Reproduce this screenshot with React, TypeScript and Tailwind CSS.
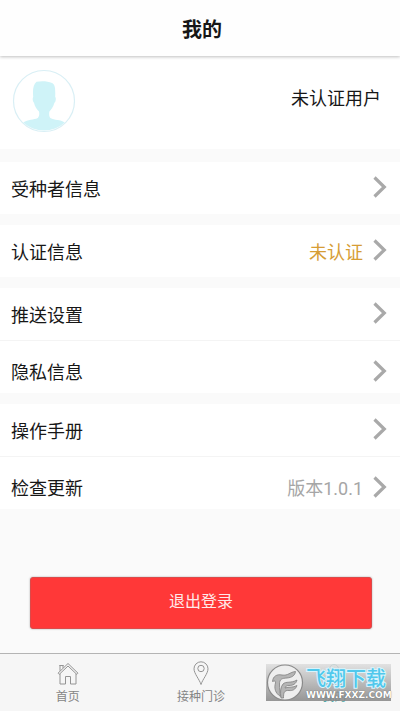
import { useState } from "react";

interface MenuItem {
  label: string;
  value?: string;
  valueClass?: string;
}

const MENU_GROUPS: MenuItem[][] = [
  [{ label: "受种者信息" }],
  [{ label: "认证信息", value: "未认证", valueClass: "text-[#d69d35]" }],
  [{ label: "推送设置" }, { label: "隐私信息" }],
  [{ label: "操作手册" }, { label: "检查更新", value: "版本1.0.1", valueClass: "text-[#a6a6a6]" }],
];

function Avatar() {
  return (
    <svg viewBox="0 0 64 64" className="w-16 h-16" aria-hidden="true">
      <circle cx="32" cy="32" r="30.5" fill="#fff" stroke="#d9eff5" strokeWidth="1.2" />
      <path
        d="M24.500 12.800C30 11.800 36 12.300 40 14c3 1.500 3.500 5 3.200 14 1 .5.800 4.500-.8 5.800-1 3.700-3 6.700-5 8.700-.5 2.500-.3 5 1 6.500 4 2.500 10 1.200 14.300 4.500a30.500 30.500 0 0 1-41.400 0c4.500-3.300 10.500-2.500 14.500-4.500 1.500-1.500 1.800-4 1.200-6.500-2.200-2-4.200-5-5-8.700-1.500-1.300-1.600-4.800-.8-5.800-.5-7-.3-12 3.300-15.200z"
        fill="#cff3f8"
      />
    </svg>
  );
}

function Chevron() {
  return (
    <svg viewBox="0 0 14 22" className="w-3.5 h-[22px] shrink-0" fill="none" aria-hidden="true">
      <path d="M1.500 1.500 11.300 11l-9.800 9.500" stroke="#a9a9a9" strokeWidth="3.2" />
    </svg>
  );
}

function MenuRow({ label, value, valueClass }: MenuItem) {
  return (
    <button
      type="button"
      className="flex w-full h-[52px] items-center bg-white pl-[11px] pr-[13px] text-left text-lg not-first:pt-[7px] first:pb-0.5"
    >
      <span className="flex-1 pt-[5px] text-[#171717]">{label}</span>
      {value && <span className={`pt-[5px] pr-2.5 ${valueClass}`}>{value}</span>}
      <Chevron />
    </button>
  );
}

function HomeIcon() {
  return (
    <svg viewBox="0 0 22 24" className="w-[22px] h-6" fill="none" stroke="#949494" strokeWidth="1" aria-hidden="true">
      <path d="M1 12.200 11 2.500l10 9.700-1.200 1.200L11 5l-8.800 8.400z" />
      <path d="M3 12.700V23h5.500v-7.500h5V23H19V12.700M3 9.800V4.500h3v2.400M2.300 4.500h4.400" />
    </svg>
  );
}

function PinIcon() {
  return (
    <svg viewBox="0 0 16 24" className="w-4 h-6" fill="none" stroke="#949494" strokeWidth="1" aria-hidden="true">
      <path d="M8 23.500C6.500 18.500 1 12.500 1 7.800a7 7 0 0 1 14 0c0 4.700-5.500 10.700-7 15.700z" />
      <circle cx="8" cy="7.500" r="3.200" />
    </svg>
  );
}

function UserIcon() {
  return (
    <svg viewBox="0 0 22 24" className="w-[22px] h-6" fill="none" stroke="#4fa7a6" strokeWidth="1" aria-hidden="true">
      <circle cx="11" cy="8" r="4.500" />
      <path d="M2 23c0-6 4-9 9-9s9 3 9 9z" />
    </svg>
  );
}

// Download site badge that sits over the last tab
function SiteBadge() {
  return (
    <div className="absolute right-[9px] bottom-2.5 flex h-[37px] w-[125px] items-center bg-linear-to-b from-[#dedede]/85 to-[#858585]/85">
      <svg viewBox="0 0 38 37" className="w-[38px] h-[37px] shrink-0" aria-hidden="true">
        <circle cx="19" cy="18.500" r="17.500" fill="#eee" stroke="#8a8a8a" strokeWidth="1.200" />
        <path
          d="M6.500 17.500C7 12 11 10 16 11c6 1 8-3 13.500-3.500-.5 4-3.500 6-8.500 6.500-5 .3-7.500 1-7.500 6 0 5 .5 9 1 12.500C9 29 8 24 9.500 19c.5-2-.5-2.500-3-1.500z"
          fill="#b5b5b5"
          stroke="#808080"
          strokeWidth=".8"
        />
        <path
          d="M15 34c-1-6-.5-11 2-14 3-3 8-.5 14-4-1 4-4 5.500-8 5.500-2.500 0-3.500.8-4 2.500 4-1.500 8 0 12-2.500-1.500 4-4.500 5.500-8 5-5-.5-5.500 2.500-5.500 7.500z"
          fill="#b5b5b5"
          stroke="#808080"
          strokeWidth=".8"
        />
      </svg>
      <div className="flex flex-col whitespace-nowrap pl-0.5 pt-1">
        <span className="text-[20px] leading-[22px] font-medium text-[#50c8ec] [-webkit-text-stroke:2px_#d8f4fc] [paint-order:stroke_fill]">飞翔下载</span>
        <span className="font-['DejaVu_Sans','Noto_Sans',sans-serif] text-[9px] leading-[11px] font-bold text-white [text-shadow:0_0_1px_#555]">
          WWW.FXXZ.COM
        </span>
      </div>
    </div>
  );
}

const TABS = [
  { name: "首页", Icon: HomeIcon },
  { name: "接种门诊", Icon: PinIcon },
  { name: "我的", Icon: UserIcon },
];

export default function App() {
  const [active, setActive] = useState("我的");

  return (
    <div className="flex min-h-screen flex-col bg-[#fafafa] font-[Roboto,'Noto_Sans_CJK_SC',sans-serif]">
      <header className="relative flex h-14 items-center justify-center bg-[#fefefe] pt-1 pl-1 shadow-[0_1px_3px_rgba(0,0,0,0.25)]">
        <h1 className="text-xl font-bold text-[#171717]">我的</h1>
      </header>

      <main className="flex flex-1 flex-col">
        <section className="flex h-[93px] items-center justify-between bg-white pb-1 pl-3 pr-[19px]">
          <Avatar />
          <span className="pb-1 text-lg text-[#171717]">未认证用户</span>
        </section>

        <div className="flex flex-col gap-[11px] pt-[13px]">
          {MENU_GROUPS.map((group) => (
            <div key={group[0].label} className="flex flex-col gap-px bg-[#f4f4f4]">
              {group.map((item) => (
                <MenuRow key={item.label} {...item} />
              ))}
            </div>
          ))}
        </div>

        <div className="mt-auto pl-[30px] pr-7 pb-6">
          <button
            type="button"
            className="h-[52px] w-full rounded-[3px] border border-[#dc4a4a] bg-[#ff3838] pb-0.5 text-base text-[#ffe9e9] shadow-[0_0_2px_rgba(0,0,0,0.35)]"
          >
            退出登录
          </button>
        </div>
      </main>

      <nav className="relative flex h-[58px] border-t border-[#b4b4b4] bg-[#f6f6f6]">
        {TABS.map(({ name, Icon }) => (
          <button
            key={name}
            type="button"
            onClick={() => setActive(name)}
            className={`flex flex-1 flex-col items-center gap-[3px] pt-[7px] pl-0.5 text-xs leading-[18px] ${active === name ? "text-[#4fa7a6]" : "text-[#858585]"}`}
          >
            <Icon />
            {name}
          </button>
        ))}
        <SiteBadge />
      </nav>
    </div>
  );
}
